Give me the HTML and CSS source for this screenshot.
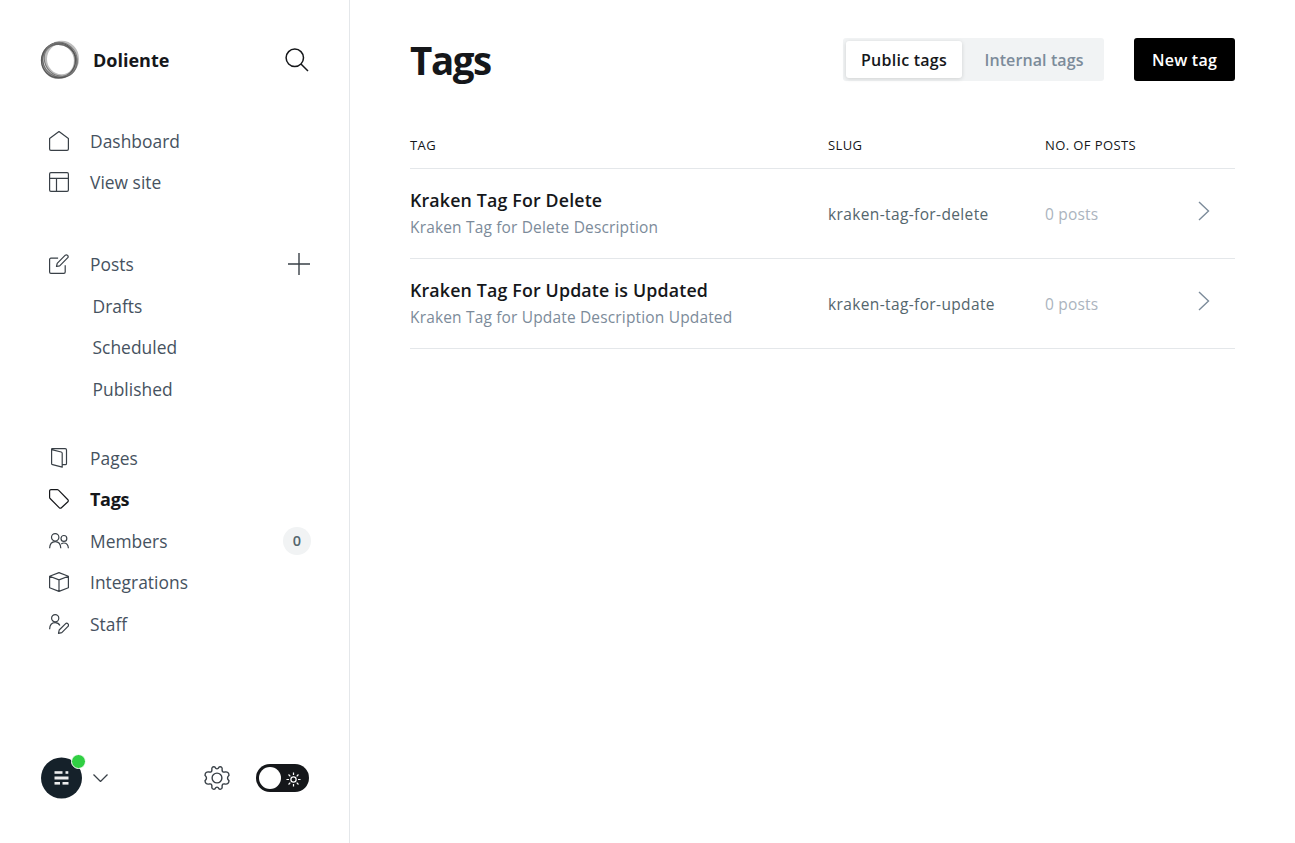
FILE: index.html
```html
<!DOCTYPE html>
<html lang="en">
<head>
<meta charset="utf-8">
<title>Tags - Doliente</title>
<link rel="stylesheet" href="styles.css">
</head>
<body>
<div class="app">
  <aside class="sidebar">
    <header class="brand">
      <svg class="brand-logo" viewBox="0 0 40 40" fill="none">
        <ellipse cx="21.500" cy="19" rx="16" ry="16.800" stroke="#bdbdbd" stroke-width="3"/>
        <ellipse cx="18.700" cy="20.800" rx="16.500" ry="17" stroke="#999" stroke-width="2.600" opacity=".8"/>
        <ellipse cx="18.500" cy="20.300" rx="17" ry="17.500" stroke="#444" stroke-width="1.300" opacity=".8"/>
        <ellipse cx="20.300" cy="20.800" rx="17.600" ry="16" stroke="#555" stroke-width="1.300" opacity=".8" transform="rotate(35 20 20)"/>
        <ellipse cx="21" cy="19.800" rx="16" ry="17.400" stroke="#777" stroke-width="1" transform="rotate(-35 20 20)"/>
      </svg>
      <span class="brand-name">Doliente</span>
      <svg class="search" viewBox="0 0 24 24"><circle cx="9.800" cy="9.800" r="8.700"/><path d="M16 16l7 7"/></svg>
    </header>

    <nav class="nav">
      <ul class="group">
        <li class="item"><svg class="icon" viewBox="0 0 20 20"><path d="M.6 7.400 10 .6l9.400 6.800V18a1.300 1.300 0 0 1-1.300 1.300H1.900A1.300 1.300 0 0 1 .6 18z"/></svg><span class="label">Dashboard</span></li>
        <li class="item"><svg class="icon" viewBox="0 0 20 20"><rect x=".6" y=".6" width="18.800" height="18.800" rx="1.300"/><path d="M.6 6.300h18.800M7.500 6.300v13.100"/></svg><span class="label">View site</span></li>
      </ul>
      <ul class="group">
        <li class="item"><svg class="icon" viewBox="0 0 20 20"><path d="M16.200 11.300v6.700a1.300 1.300 0 0 1-1.300 1.300H1.900A1.300 1.300 0 0 1 .6 18V5.500a1.300 1.300 0 0 1 1.300-1.300h7.200M7.500 12.500l.7-3.200 8.100-8.100a1.800 1.800 0 0 1 2.500 2.500l-8.100 8.100z"/></svg><span class="label">Posts</span><svg class="plus" viewBox="0 0 22 22"><path d="M11 0v22M0 11h22"/></svg></li>
        <li class="item sub"><span class="label">Drafts</span></li>
        <li class="item sub"><span class="label">Scheduled</span></li>
        <li class="item sub"><span class="label">Published</span></li>
      </ul>
      <ul class="group">
        <li class="item"><svg class="icon" viewBox="0 0 20 20"><path d="M2.600 1.700 12.200 4a1.300 1.300 0 0 1 1 1.300v13.900L3.600 16.700a1.300 1.300 0 0 1-1-1.300zM2.600 1.700V1.200Q2.600.7 3.300.7h12.900a1.300 1.300 0 0 1 1.300 1.300v13.400a1.300 1.300 0 0 1-1.300 1.300h-3"/></svg><span class="label">Pages</span></li>
        <li class="item active"><svg class="icon" viewBox="0 0 20 20"><path d="M.6 2v6.300q0 .7.500 1.200l9.300 9.300a1.400 1.400 0 0 0 2 0l6.500-6.100a1.400 1.400 0 0 0 0-2L9.500 1.200Q9 .6 8.200.6H2A1.400 1.400 0 0 0 .6 2z"/></svg><span class="label">Tags</span></li>
        <li class="item"><svg class="icon" viewBox="0 0 20 20"><circle cx="6.200" cy="6.300" r="3.700"/><circle cx="14.900" cy="7.400" r="2.900"/><path d="M.6 17.300c.2-4.300 2.400-6.600 5.600-6.600s5.400 2.300 5.600 6.600M12.300 13c.7-.7 1.500-1 2.500-1 2.800 0 4.400 1.900 4.600 5.300"/></svg><span class="label">Members</span><span class="badge">0</span></li>
        <li class="item"><svg class="icon" viewBox="0 0 20 20"><path d="M10 .6l9.400 3.600v11.600L10 19.400.6 15.800V4.200zM.6 4.200 10 7.900l9.400-3.700M10 7.900v11.500"/></svg><span class="label">Integrations</span></li>
        <li class="item"><svg class="icon" viewBox="0 0 20 20"><circle cx="6.200" cy="4.200" r="3.600"/><path d="M.6 15.200c.2-4.400 2.400-6.500 5.600-6.500 2.200 0 3.800 1 4.700 2.900M9.500 19.400l.7-3.400 6.200-6.200a1.800 1.800 0 0 1 2.600 2.600l-6.200 6.200z"/></svg><span class="label">Staff</span></li>
      </ul>
    </nav>

    <footer class="foot">
      <div class="avatar">
        <svg viewBox="0 0 42 42"><circle cx="21.500" cy="21" r="20.500" fill="#15212a"/><g fill="#fff" opacity=".92"><rect x="14.500" y="14.200" width="8" height="2.600"/><rect x="25.500" y="14.200" width="2.800" height="2.600"/><rect x="14.500" y="19.500" width="14" height="3"/><rect x="14.500" y="25" width="5.500" height="2.600"/><rect x="22.500" y="25" width="6" height="2.600"/></g></svg>
        <span class="online"></span>
      </div>
      <svg class="caret" viewBox="0 0 15 8"><path d="M.5.5l7 7 7-7"/></svg>
      <svg class="gear" viewBox="0 0 26 26"><circle cx="13" cy="13" r="4.900"/><path d="M10.700 1.900Q13 5.900 15.300 1.900 Q18.700 1.200 18.100 5.100 Q18.300 7.700 21 7 Q24.700 6.400 25 10.200 Q22 13 25 15.800 Q24.700 19.600 21 19 Q18.300 18.300 18.100 20.900 Q18.700 24.800 15.300 24.100 Q13 20.100 10.700 24.100 Q7.300 24.800 7.900 20.900 Q7.700 18.300 5 19 Q1.300 19.600 1 15.800 Q4 13 1 10.200 Q1.300 6.400 5 7 Q7.700 7.700 7.900 5.100 Q7.300 1.200 10.700 1.900z"/></svg>
      <span class="toggle"><span class="knob"></span><svg class="sun" viewBox="0 0 16 16"><circle cx="8" cy="8" r="2.800"/><path d="M8 .5v2.700M8 12.800v2.700M.5 8h2.700M12.800 8h2.700M2.700 2.700l1.900 1.900M11.400 11.400l1.900 1.900M2.700 13.300l1.900-1.900M11.400 4.600l1.900-1.900"/></svg></span>
    </footer>
  </aside>

  <main class="main">
    <header class="head">
      <h1 class="title">Tags</h1>
      <div class="tabs"><button class="tab on">Public tags</button><button class="tab">Internal tags</button></div>
      <button class="new">New tag</button>
    </header>
    <section class="table">
      <div class="row labels"><span>Tag</span><span>Slug</span><span>No. of posts</span></div>
      <div class="row">
        <div><h3 class="name">Kraken Tag For Delete</h3><p class="desc">Kraken Tag for Delete Description</p></div>
        <span class="slug">kraken-tag-for-delete</span><span class="posts">0 posts</span>
        <svg class="chev" viewBox="0 0 12 20"><path d="M1 1l9.500 9L1 19"/></svg>
      </div>
      <div class="row">
        <div><h3 class="name">Kraken Tag For Update is Updated</h3><p class="desc">Kraken Tag for Update Description Updated</p></div>
        <span class="slug">kraken-tag-for-update</span><span class="posts">0 posts</span>
        <svg class="chev" viewBox="0 0 12 20"><path d="M1 1l9.500 9L1 19"/></svg>
      </div>
    </section>
  </main>
</div>
</body>
</html>
```
FILE: styles.css
```css
* { box-sizing: border-box; }
body { margin: 0; background: #fff; color: #15171a; font-family: "Open Sans", "Noto Sans", sans-serif; }
h1, h3, p, ul { margin: 0; padding: 0; }
ul { list-style: none; }
button { border: 0; font: inherit; white-space: nowrap; }
svg { display: block; flex: none; fill: none; }
.app { display: flex; height: 843px; overflow: hidden; }

.sidebar { width: 350px; flex: none; display: flex; flex-direction: column; border-right: 1px solid #e4e7ea; }
.brand { display: flex; align-items: center; height: 120px; padding: 0 40.500px 0 40px; }
.brand-logo { width: 40px; height: 40px; }
.brand-name { margin-left: 13px; font-size: 18px; font-weight: 700; }
.search { width: 24px; height: 24px; margin-left: auto; stroke: #15171a; stroke-width: 1.500; }

.nav { display: flex; flex-direction: column; }
.group { margin-bottom: 41px; }
.group + .group + .group { margin-top: -13px; }
.item { display: flex; align-items: center; height: 41.400px; padding: 0 39px 0 49px; color: #394047; font-size: 17.400px; white-space: nowrap; }
.icon { width: 20px; height: 20px; margin-right: 21px; stroke: currentColor; stroke-width: 1.200; stroke-linejoin: round; }
.label { color: #465260; letter-spacing: .02px; }
.sub { padding-left: 92.500px; }
.active { color: #15171a; }
.active .label { color: #15171a; font-size: 18px; font-weight: 700; letter-spacing: -.3px; }
.plus { width: 22px; height: 22px; margin-left: auto; stroke: #394047; stroke-width: 1.400; }
.badge { display: grid; place-items: center; width: 28px; height: 28px; margin: 0 -1px 0 auto; border-radius: 50%; background: #f1f3f4; color: #54666d; font-size: 14.500px; font-weight: 600; }

.foot { display: flex; align-items: center; height: 42px; margin: auto 40px 44px; }
.avatar { position: relative; width: 42px; height: 42px; }
.online { position: absolute; top: -3px; right: -4px; width: 15px; height: 15px; border: 1px solid #fff; border-radius: 50%; background: #30cf43; }
.caret { width: 15px; height: 8px; margin-left: 11px; stroke: #394047; stroke-width: 1.300; }
.gear { width: 26px; height: 26px; margin-left: auto; stroke: #394047; stroke-width: 1.400; }
.toggle { display: flex; align-items: center; justify-content: space-between; width: 53px; height: 28px; margin-left: 26.500px; padding: 0 8px 0 3px; border-radius: 14px; background: #15171a; }
.knob { width: 22px; height: 22px; border-radius: 50%; background: #fff; }
.sun { width: 15px; height: 15px; margin-top: 3px; stroke: #fff; stroke-width: 1.300; }

.main { flex: 1; padding: 0 60px; }
.head { display: flex; align-items: center; height: 119px; }
.title { font-size: 38.500px; font-weight: 700; letter-spacing: -1.400px; }
.tabs { display: flex; height: 43px; margin: 0 30px 0 auto; padding: 3px; border-radius: 3px; background: #f1f3f4; }
.tab { width: 116px; padding: 0; border-radius: 3px; background: none; color: #7c8b9a; font-size: 16px; font-weight: 600; letter-spacing: .1px; }
.tab + .tab { width: 139px; padding-left: 5px; }
.tab.on { background: #fff; color: #15171a; letter-spacing: .25px; box-shadow: 0 1px 4px rgba(0, 0, 0, .14); }
.new { width: 101px; height: 43px; padding: 0; border-radius: 3px; background: #000; color: #fff; font-size: 16px; font-weight: 600; letter-spacing: .25px; }

.row { display: grid; grid-template-columns: 418px 217px 1fr 37px; align-items: center; height: 90px; border-bottom: 1px solid #e4e7ea; white-space: nowrap; }
.labels { height: 50px; padding-top: 2px; font-size: 13px; letter-spacing: .4px; text-transform: uppercase; }
.name { font-size: 17.800px; font-weight: 600; line-height: 27px; letter-spacing: .16px; }
.desc { color: #7c8b9a; font-size: 15.500px; line-height: 26px; letter-spacing: .16px; }
.slug { color: #54666d; font-size: 15.500px; letter-spacing: .37px; }
.posts { color: #abb4be; font-size: 15.500px; letter-spacing: .2px; }
.chev { width: 12px; height: 20px; margin-top: -5px; stroke: #7c8b9a; stroke-width: 1.400; }
```
